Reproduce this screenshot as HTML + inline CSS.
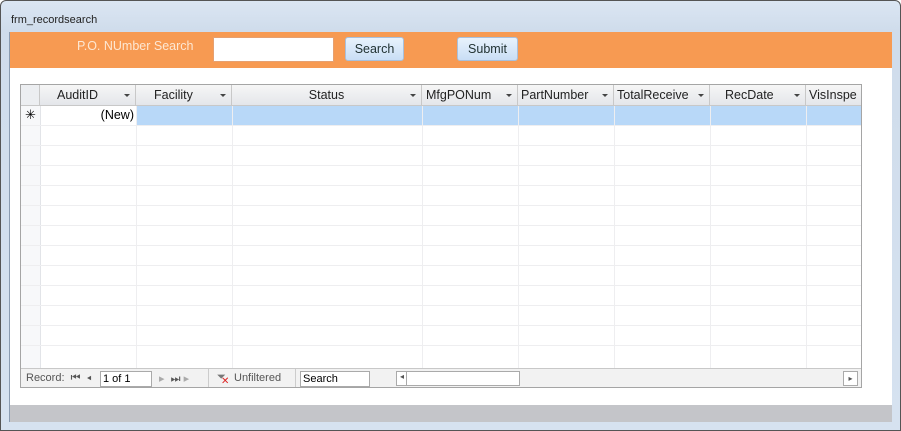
<!DOCTYPE html><html><head><style>
body{margin:0;width:901px;height:431px;overflow:hidden;font-family:"Liberation Sans",sans-serif;background:#fff}
.win{position:absolute;left:0;top:0;width:899px;height:429px;border:1px solid #555;border-radius:6px 6px 0 0;background:linear-gradient(#dbe6f3,#cfdceb 30px,#d6e2f0);}
.title{position:absolute;left:10px;top:13px;font-size:11px;color:#222}
.form{position:absolute;left:8px;top:31px;width:882px;height:390px;background:#fff;border-left:1px solid #8a9bb0}
.hdr{position:absolute;left:0;top:0;width:882px;height:36px;background:#f79a52}
.lbl{position:absolute;left:67px;top:7px;font-size:12.5px;color:#fde7d2}
.tb{position:absolute;left:203px;top:5px;width:119px;height:23px;background:#fff;border:1px solid #e6a070}
.btn{position:absolute;top:5px;height:22px;border:1px solid #a8c0dc;border-radius:3px;background:linear-gradient(#e8f2fc,#c9def5);font-size:12.5px;color:#233;text-align:center;line-height:22px}
.grey{position:absolute;left:0;top:373px;width:882px;height:17px;background:#c4c5c9}
.grid{position:absolute;left:10px;top:52px;width:840px;height:302px;border:1px solid #a5a5a5;background:#fff;overflow:hidden}
.gh{position:absolute;top:0;height:21px;background:linear-gradient(#f6f6f6,#e4e6ea);border-right:1px solid #c8c8c8;border-bottom:1px solid #c8c8c8;font-size:12.5px;color:#222;line-height:20px;box-sizing:border-box;white-space:nowrap;overflow:hidden}
.arr{position:absolute;right:5px;top:9px;width:0;height:0;border-left:3px solid transparent;border-right:3px solid transparent;border-top:3px solid #444}
.rowsel{position:absolute;left:115px;top:21px;width:725px;height:19px;background:#b8d8f8}
.vl{position:absolute;top:21px;width:1px;height:262px;background:#eeeef0}
.hl{position:absolute;left:0;width:840px;height:1px;background:#eeeef0}
.nav{position:absolute;left:0;top:283px;width:840px;height:19px;background:#f2f2f2;border-top:1px solid #c8c8c8;font-size:11px;color:#555}
</style></head><body>
<div class="win"><div class="title">frm_recordsearch</div>
<div class="form">
<div class="hdr"><div class="lbl">P.O. NUmber Search</div><div class="tb"></div>
<div class="btn" style="left:335px;width:57px">Search</div>
<div class="btn" style="left:447px;width:59px">Submit</div></div>
<div class="grid">
<div class="gh" style="left:0;width:19px;background:#eceef1"></div>
<div class="gh" style="left:19px;width:96px;padding-left:17px">AuditID<i class="arr"></i></div>
<div class="gh" style="left:115px;width:96px;padding-left:18px">Facility<i class="arr"></i></div>
<div class="gh" style="left:211px;width:190px;text-align:center">Status<i class="arr"></i></div>
<div class="gh" style="left:401px;width:96px;padding-left:4px">MfgPONum<i class="arr"></i></div>
<div class="gh" style="left:497px;width:96px;padding-left:3px">PartNumber<i class="arr"></i></div>
<div class="gh" style="left:593px;width:96px;padding-left:3px">TotalReceive<i class="arr"></i></div>
<div class="gh" style="left:689px;width:96px;padding-left:15px">RecDate<i class="arr"></i></div>
<div class="gh" style="left:785px;width:60px;padding-left:3px">VisInspe</div>
<div class="rowsel"></div>
<div style="position:absolute;left:19px;top:21px;width:96px;height:19px;background:#fff;text-align:right;font-size:12.5px;line-height:19px;box-sizing:border-box;padding-right:2px">(New)</div>
<div style="position:absolute;left:0;top:21px;width:19px;height:262px;background:#f7f8fa;border-right:1px solid #e2e4e8"></div>
<div style="position:absolute;left:4px;top:22px;font-size:13px">✳</div>
<div class="vl" style="left:115px"></div><div class="vl" style="left:211px"></div><div class="vl" style="left:401px"></div><div class="vl" style="left:497px"></div><div class="vl" style="left:593px"></div><div class="vl" style="left:689px"></div><div class="vl" style="left:785px"></div>
<div class="hl" style="top:40px"></div><div class="hl" style="top:60px"></div><div class="hl" style="top:80px"></div><div class="hl" style="top:100px"></div><div class="hl" style="top:120px"></div><div class="hl" style="top:140px"></div><div class="hl" style="top:160px"></div><div class="hl" style="top:180px"></div><div class="hl" style="top:200px"></div><div class="hl" style="top:220px"></div><div class="hl" style="top:240px"></div><div class="hl" style="top:260px"></div>
<div class="nav">
<span style="position:absolute;left:5px;top:3px">Record: &nbsp;⏮ &nbsp;◂</span>
<div style="position:absolute;left:79px;top:2px;width:48px;height:14px;background:#fff;border:1px solid #aaa;color:#000;font-size:11px;padding-left:2px;line-height:14px">1 of 1</div>
<span style="position:absolute;left:138px;top:3px;color:#aaa">▸ &nbsp;<span style="color:#555">⏭</span> ▸</span>
<div style="position:absolute;left:187px;top:0;width:1px;height:19px;background:#ccc"></div>
<span style="position:absolute;left:196px;top:2px;color:#777">⏷</span><span style="position:absolute;left:200px;top:7px;color:#d22;font-size:10px">✕</span>
<span style="position:absolute;left:213px;top:3px">Unfiltered</span>
<div style="position:absolute;left:274px;top:0;width:1px;height:19px;background:#ccc"></div>
<div style="position:absolute;left:279px;top:2px;width:66px;height:14px;background:#fff;border:1px solid #aaa;color:#000;padding-left:2px;line-height:14px">Search</div>
<div style="position:absolute;left:375px;top:2px;width:122px;height:13px;background:#fff;border:1px solid #aaa"></div>
<span style="position:absolute;left:379px;top:3px;font-size:8px">◂</span>
<div style="position:absolute;left:385px;top:2px;width:1px;height:15px;background:#aaa"></div>
<div style="position:absolute;left:822px;top:2px;width:13px;height:13px;border:1px solid #aaa;background:#fff;font-size:8px;text-align:center;line-height:13px">▸</div>
</div></div>
<div class="grey"></div>
</div></div>
</body></html>
